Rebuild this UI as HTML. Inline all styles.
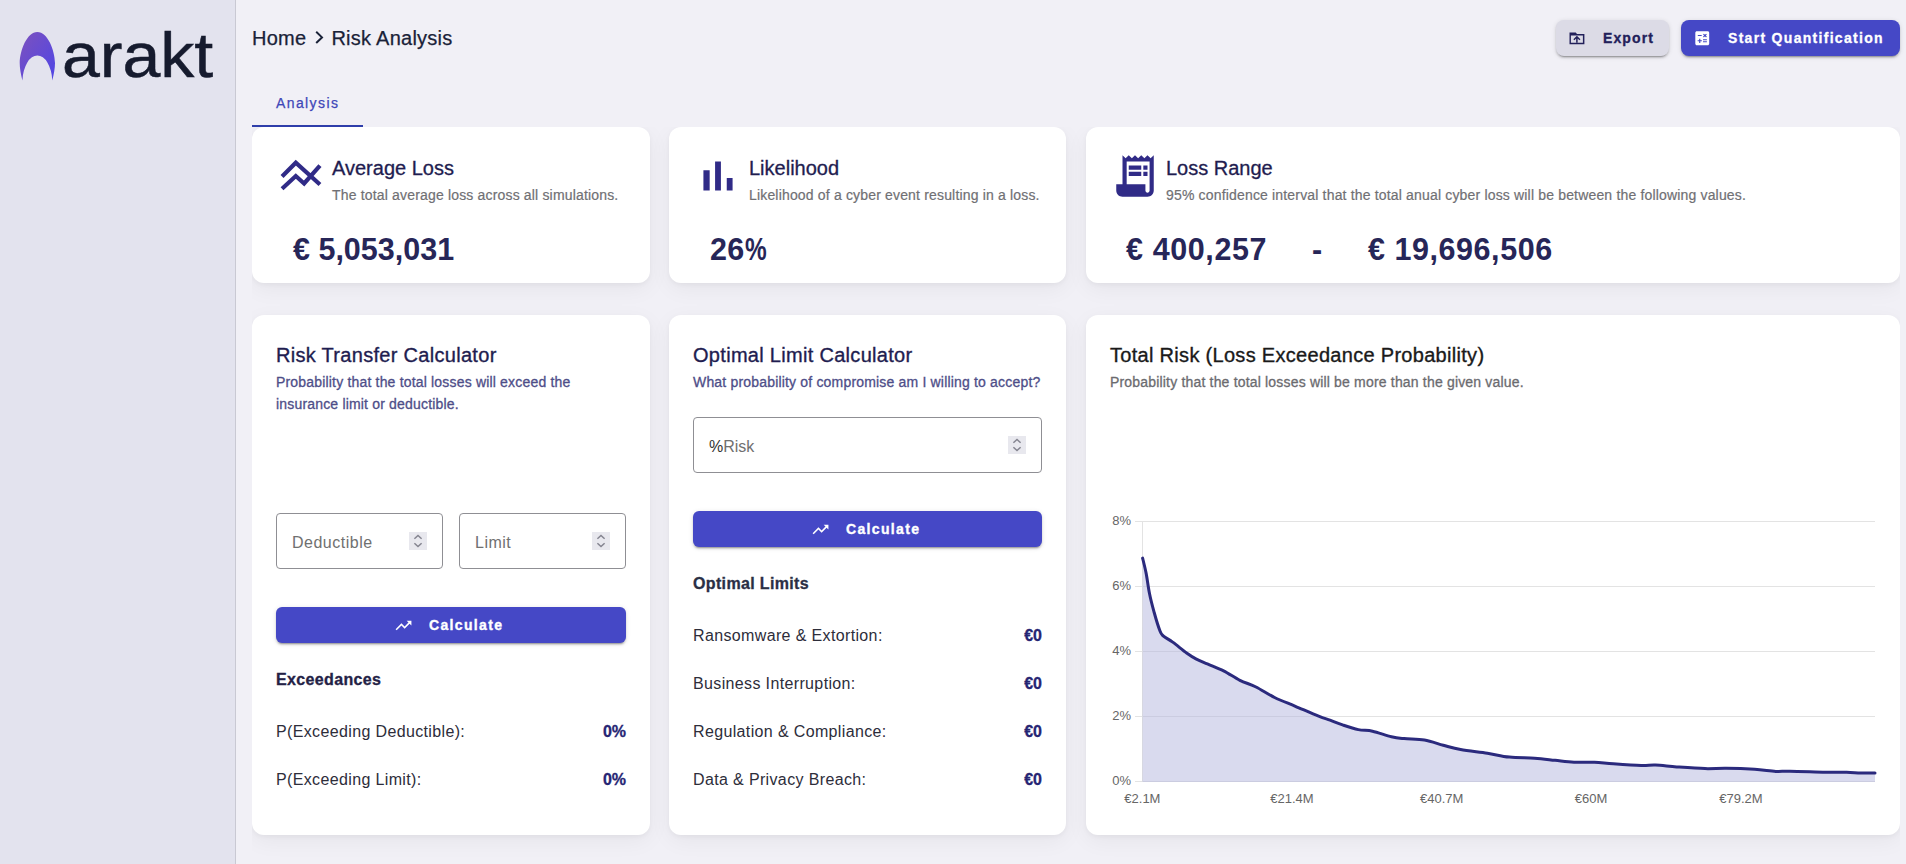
<!DOCTYPE html>
<html><head><meta charset="utf-8">
<style>
*{box-sizing:border-box;margin:0;padding:0}
html,body{width:1906px;height:864px;overflow:hidden}
body{font-family:"Liberation Sans",sans-serif;background:#f1f0f6;position:relative;color:#1f1d4f}
.abs{position:absolute}
#side{left:0;top:0;width:235px;height:864px;background:#e3e3ee;border-right:1px solid #c9c9d3;width:236px}
.logo-text{left:62px;top:14.5px;font-size:63px;color:#161b2e;letter-spacing:0px;line-height:80px;-webkit-text-stroke:0.5px #161b2e;transform-origin:0 0;transform:scaleX(1.08)}
.crumb{left:252px;top:26px;font-size:20px;color:#1a2238;line-height:24px;white-space:nowrap;letter-spacing:0.26px;-webkit-text-stroke:0.25px currentColor}
.btn{border-radius:8px;font-weight:bold;font-size:14px;-webkit-text-stroke:0.3px currentColor;letter-spacing:1.1px;line-height:36px;white-space:nowrap}
#export{left:1556px;top:20px;width:113px;height:36px;background:#dcdbe6;color:#22205a;box-shadow:0 3px 1px -2px rgba(0,0,0,.2),0 2px 2px 0 rgba(0,0,0,.14),0 1px 5px 0 rgba(0,0,0,.12)}
#startq{left:1681px;top:20px;width:219px;height:36px;background:#4548c6;color:#fff;letter-spacing:1.3px;box-shadow:0 3px 1px -2px rgba(0,0,0,.2),0 2px 2px 0 rgba(0,0,0,.14),0 1px 5px 0 rgba(0,0,0,.12)}
.tab{left:276px;top:95px;font-size:14px;color:#3f47b8;letter-spacing:1.4px;font-weight:normal;-webkit-text-stroke:0.25px currentColor}
.tabline{left:252px;top:125px;width:111px;height:2px;background:#2f3eaa}
.card{background:#fff;border-radius:12px;box-shadow:0 2px 5px rgba(0,0,0,.04),0 6px 22px rgba(0,0,0,.05)}
.ctitle{font-size:20px;line-height:24px;color:#1f1d50;white-space:nowrap;-webkit-text-stroke:0.3px currentColor}
.cdesc{font-size:14px;line-height:18px;color:#707074;white-space:nowrap;letter-spacing:0.17px;-webkit-text-stroke:0.2px currentColor}
.cval{font-size:30.5px;font-weight:bold;color:#272658;white-space:nowrap;line-height:36px}
.h2{font-size:20px;line-height:24px;color:#1f1d50;white-space:nowrap;letter-spacing:0.3px;-webkit-text-stroke:0.35px currentColor}
.sub{font-size:14px;line-height:22px;color:#4e4e88;letter-spacing:0.18px;-webkit-text-stroke:0.3px currentColor}
.input{border:1px solid #8f8f94;border-radius:4px;background:#fff}
.ph{font-size:16px;color:#707070;line-height:20px;white-space:nowrap;letter-spacing:0.5px;margin-top:1px}
.spin{width:18px;height:18px;background:#e8e8ee}
.calc{-webkit-text-stroke:0.35px #fff;background:#4548c6;border-radius:6px;box-shadow:0 3px 1px -2px rgba(0,0,0,.2),0 2px 2px 0 rgba(0,0,0,.14),0 1px 5px 0 rgba(0,0,0,.12);color:#fff;font-weight:bold;font-size:14px;letter-spacing:1.35px;line-height:36px;white-space:nowrap}
.sect{-webkit-text-stroke:0.3px currentColor;font-size:16px;font-weight:bold;color:#232145;line-height:20px;white-space:nowrap;letter-spacing:0.35px}
.row{font-size:16px;color:#2d2d3a;line-height:20px;white-space:nowrap;letter-spacing:0.36px}
.rval{-webkit-text-stroke:0.3px currentColor;font-size:16px;font-weight:bold;color:#262573;line-height:20px;white-space:nowrap;text-align:right}
.ax{font-size:13px;color:#666;line-height:14px;white-space:nowrap}
</style></head>
<body>

<div id="side" class="abs"></div>
<!-- logo -->
<svg class="abs" style="left:0;top:0" width="80" height="100" viewBox="0 0 80 100">
<defs><linearGradient id="lg" x1="0" y1="0" x2="1" y2="1"><stop offset="0" stop-color="#7d52bd"/><stop offset="1" stop-color="#4f45e6"/></linearGradient></defs>
<path d="M22.4 80.4 C20.8 74 19.7 68 19.7 62.9 C20 50 27 32 37.35 32 C47.7 32 54.7 50 55 62.9 C55 68 53.9 74 52.3 80.4 A15 27.1 0 0 0 22.4 80.4 Z" fill="url(#lg)"/>
</svg>
<div class="abs logo-text">arakt</div>
<!-- breadcrumb -->
<div class="abs crumb">Home<svg style="display:inline-block;vertical-align:-2px;margin:0 7px 0 8px" width="10" height="18" viewBox="0 0 10 18"><path d="M2.2 2.8 L8 8.4 L2.2 14" fill="none" stroke="#1a2238" stroke-width="2"/></svg>Risk Analysis</div>
<!-- buttons -->
<div id="export" class="abs btn">
 <svg class="abs" style="left:13px;top:11.5px" width="17" height="14" viewBox="0 0 17 14"><path fill-rule="evenodd" d="M0.5 0.6 H6.7 L8 1.9 H15.4 V12.3 H0.5 Z M1.9 3.5 V10.7 H13.9 V3.5 Z" fill="#22205a"/><path d="M4.9 7.7 L7.9 4.7 L10.9 7.7 M7.9 5.2 V10.7" fill="none" stroke="#22205a" stroke-width="1.5"/></svg>
 <span class="abs" style="left:47px;top:0">Export</span>
</div>
<div id="startq" class="abs btn">
 <svg class="abs" style="left:12px;top:9px" width="18.5" height="18.5" viewBox="0 0 24 24"><path d="M19 3H5c-1.1 0-2 .9-2 2v14c0 1.1.9 2 2 2h14c1.1 0 2-.9 2-2V5c0-1.1-.9-2-2-2zm-5.970 4.06L14.09 6l1.41 1.41L16.91 6l1.06 1.06-1.41 1.41 1.41 1.41-1.06 1.06-1.41-1.4-1.41 1.41-1.06-1.060 1.41-1.41-1.41-1.42zm-6.78.66h5v1.5h-5v-1.5zM11.5 16h-2v2H8v-2H6v-1.5h2v-2h1.5v2h2V16zm6.5 1.25h-5v-1.5h5v1.5zm0-2.5h-5v-1.5h5v1.5z" fill="#fff"/></svg>
 <span class="abs" style="left:47px;top:0">Start Quantification</span>
</div>
<!-- tab -->
<div class="abs tab">Analysis</div>
<div class="abs tabline"></div>

<!-- cards -->
<div class="abs" style="left:252px;top:127px;width:1648px;height:737px;overflow:hidden"><div class="abs" style="left:-252px;top:-127px;width:1906px;height:864px">
<div class="abs card" style="left:252px;top:127px;width:398px;height:156px"></div>
<div class="abs card" style="left:669px;top:127px;width:397px;height:156px"></div>
<div class="abs card" style="left:1086px;top:127px;width:814px;height:156px"></div>
<div class="abs card" style="left:252px;top:315px;width:398px;height:520px"></div>
<div class="abs card" style="left:669px;top:315px;width:397px;height:520px"></div>
<div class="abs card" style="left:1086px;top:315px;width:814px;height:520px"></div>
</div></div>

<svg class="abs" style="left:276px;top:151px" width="50" height="50" viewBox="0 0 24 24"><path d="M2.9 12.2 L9.5 5.6 L21.1 16.1 M21.1 7.0 L13.5 15.6 L9.5 12.0 L2.9 18.1" fill="none" stroke="#302b87" stroke-width="2" stroke-linejoin="miter"/></svg>
<div class="abs ctitle" style="left:332px;top:156px">Average Loss</div>
<div class="abs cdesc" style="left:332px;top:186px">The total average loss across all simulations.</div>
<div class="abs cval" style="left:293px;top:231px">€ 5,053,031</div>

<svg class="abs" style="left:693px;top:151px" width="50" height="50" viewBox="0 0 24 24"><path d="M5 9.2h3V19H5zM10.6 5h2.8v14h-2.8zm5.6 8H19v6h-2.8z" fill="#302b87"/></svg>
<div class="abs ctitle" style="left:749px;top:156px">Likelihood</div>
<div class="abs cdesc" style="left:749px;top:186px">Likelihood of a cyber event resulting in a loss.</div>
<div class="abs cval" style="left:710px;top:231px;letter-spacing:0.3px">26<span style="display:inline-block;transform:scaleX(.8);transform-origin:0 50%">%</span></div>

<svg class="abs" style="left:1110px;top:151px" width="50" height="50" viewBox="0 0 24 24"><path d="M19.5 3.5 18 2l-1.5 1.5L15 2l-1.5 1.5L12 2l-1.5 1.5L9 2 7.5 3.5 6 2v14H3v3c0 1.66 1.34 3 3 3h12c1.66 0 3-1.34 3-3V2l-1.5 1.5zM19 19c0 .55-.45 1-1 1s-1-.45-1-1v-3H8V5h11v14z" fill="#302b87"/><path d="M9 7h6v2H9zm7 0h2v2h-2zm-7 3h6v2H9zm7 0h2v2h-2z" fill="#302b87"/></svg>
<div class="abs ctitle" style="left:1166px;top:156px">Loss Range</div>
<div class="abs cdesc" style="left:1166px;top:186px">95% confidence interval that the total anual cyber loss will be between the following values.</div>
<div class="abs cval" style="left:1126px;top:231px;letter-spacing:0.6px">€ 400,257</div>
<div class="abs cval" style="left:1312px;top:231px">-</div>
<div class="abs cval" style="left:1368px;top:231px;letter-spacing:0.55px">€ 19,696,506</div>

<!-- row 2 cards -->

<!-- Risk transfer -->
<div class="abs h2" style="left:276px;top:343px">Risk Transfer Calculator</div>
<div class="abs sub" style="left:276px;top:371px;width:350px">Probability that the total losses will exceed the insurance limit or deductible.</div>
<div class="abs input" style="left:276px;top:513px;width:167px;height:56px"></div>
<div class="abs ph" style="left:292px;top:532px">Deductible</div>
<div class="abs spin" style="left:409px;top:532px"><svg class="abs" style="left:0;top:0" width="18" height="18" viewBox="0 0 18 18"><path d="M5.4 6.8 L9 3.5 L12.6 6.8 M5.4 11.2 L9 14.5 L12.6 11.2" fill="none" stroke="#858590" stroke-width="1.5"/></svg></div>
<div class="abs input" style="left:459px;top:513px;width:167px;height:56px"></div>
<div class="abs ph" style="left:475px;top:532px">Limit</div>
<div class="abs spin" style="left:592px;top:532px"><svg class="abs" style="left:0;top:0" width="18" height="18" viewBox="0 0 18 18"><path d="M5.4 6.8 L9 3.5 L12.6 6.8 M5.4 11.2 L9 14.5 L12.6 11.2" fill="none" stroke="#858590" stroke-width="1.5"/></svg></div>
<div class="abs calc" style="left:276px;top:607px;width:350px;height:36px"><svg class="abs" style="left:117.8px;top:8.5px" width="19" height="19" viewBox="0 0 24 24"><path d="M16 6l2.29 2.29-4.88 4.88-4-4L2 16.59 3.41 18l6-6 4 4 6.3-6.29L22 12V6z" fill="#fff"/></svg><span class="abs" style="left:153px;top:0">Calculate</span></div>
<div class="abs sect" style="left:276px;top:670px">Exceedances</div>
<div class="abs row" style="left:276px;top:722px">P(Exceeding Deductible):</div>
<div class="abs rval" style="left:526px;top:722px;width:100px">0%</div>
<div class="abs row" style="left:276px;top:770px">P(Exceeding Limit):</div>
<div class="abs rval" style="left:526px;top:770px;width:100px">0%</div>

<!-- Optimal limit -->
<div class="abs h2" style="left:693px;top:343px">Optimal Limit Calculator</div>
<div class="abs sub" style="left:693px;top:371px;width:360px;white-space:nowrap">What probability of compromise am I willing to accept?</div>
<div class="abs input" style="left:693px;top:417px;width:349px;height:56px"></div>
<div class="abs ph" style="left:709px;top:436px;letter-spacing:0"><span style="color:#333">%</span>Risk</div>
<div class="abs spin" style="left:1008px;top:436px"><svg class="abs" style="left:0;top:0" width="18" height="18" viewBox="0 0 18 18"><path d="M5.4 6.8 L9 3.5 L12.6 6.8 M5.4 11.2 L9 14.5 L12.6 11.2" fill="none" stroke="#858590" stroke-width="1.5"/></svg></div>
<div class="abs calc" style="left:693px;top:511px;width:349px;height:36px"><svg class="abs" style="left:117.8px;top:8.5px" width="19" height="19" viewBox="0 0 24 24"><path d="M16 6l2.29 2.29-4.88 4.88-4-4L2 16.59 3.41 18l6-6 4 4 6.3-6.29L22 12V6z" fill="#fff"/></svg><span class="abs" style="left:153px;top:0">Calculate</span></div>
<div class="abs sect" style="left:693px;top:574px;color:#2a2f45">Optimal Limits</div>
<div class="abs row" style="left:693px;top:626px">Ransomware &amp; Extortion:</div>
<div class="abs rval" style="left:942px;top:626px;width:100px">€0</div>
<div class="abs row" style="left:693px;top:674px">Business Interruption:</div>
<div class="abs rval" style="left:942px;top:674px;width:100px">€0</div>
<div class="abs row" style="left:693px;top:722px">Regulation &amp; Compliance:</div>
<div class="abs rval" style="left:942px;top:722px;width:100px">€0</div>
<div class="abs row" style="left:693px;top:770px">Data &amp; Privacy Breach:</div>
<div class="abs rval" style="left:942px;top:770px;width:100px">€0</div>

<!-- Chart card -->
<div class="abs h2" style="left:1110px;top:343px;color:#1a1a1a">Total Risk (Loss Exceedance Probability)</div>
<div class="abs sub" style="left:1110px;top:371px;color:#6b6b6f;white-space:nowrap">Probability that the total losses will be more than the given value.</div>
<!--<!--CHART--><svg class="abs" style="left:1086px;top:315px" width="814" height="520" viewBox="0 0 814 520">
<line x1="49" y1="206.5" x2="789" y2="206.5" stroke="#e3e3e3" stroke-width="1"/><line x1="49" y1="271.5" x2="789" y2="271.5" stroke="#e3e3e3" stroke-width="1"/><line x1="49" y1="336.5" x2="789" y2="336.5" stroke="#e3e3e3" stroke-width="1"/><line x1="49" y1="401.5" x2="789" y2="401.5" stroke="#e3e3e3" stroke-width="1"/><line x1="49" y1="466.5" x2="789" y2="466.5" stroke="#e3e3e3" stroke-width="1"/>
<line x1="56.5" y1="206" x2="56.5" y2="466" stroke="#e3e3e3" stroke-width="1"/>
<path d="M56.6 243.1 C57.2 245.6 58.9 252.1 60.1 258.1 C61.3 264.1 62.2 272.4 63.6 279.0 C64.9 285.6 66.5 291.3 68.2 297.5 C69.9 303.7 72.5 312.1 74.0 316.0 C75.5 319.9 75.4 319.2 77.5 321.1 C79.6 323.0 82.9 324.3 86.7 327.1 C90.6 329.9 96.7 335.2 100.6 338.0 C104.5 340.8 106.4 342.0 109.9 343.8 C113.4 345.6 116.8 346.9 121.4 348.9 C126.0 350.9 132.2 353.1 137.6 355.8 C143.0 358.5 148.5 362.6 153.9 365.3 C159.3 368.0 164.2 369.1 170.0 372.0 C175.8 374.9 182.0 379.3 188.6 382.5 C195.2 385.7 202.1 388.2 209.4 391.3 C216.7 394.4 226.8 398.9 232.6 401.2 C238.4 403.5 240.0 403.7 244.0 405.1 C248.0 406.6 251.9 408.3 256.6 409.9 C261.3 411.5 267.3 413.6 272.3 414.6 C277.3 415.7 281.0 415.0 286.5 416.2 C292.0 417.4 300.2 420.5 305.4 421.7 C310.7 422.9 312.5 423.0 318.0 423.6 C323.5 424.2 331.9 424.0 338.4 425.1 C345.0 426.2 351.3 428.7 357.3 430.3 C363.3 431.9 367.2 433.3 374.6 434.6 C381.9 435.9 393.3 437.0 401.4 438.2 C409.5 439.5 415.5 441.3 423.4 442.1 C431.3 442.9 441.0 442.7 448.6 443.2 C456.2 443.7 462.5 444.6 469.1 445.3 C475.7 446.0 481.4 446.9 488.0 447.2 C494.6 447.5 501.9 447.0 508.4 447.2 C515.0 447.5 519.5 448.2 527.3 448.7 C535.1 449.3 548.2 450.3 555.2 450.5 C562.2 450.7 563.5 449.9 569.4 450.1 C575.3 450.3 582.4 451.3 590.7 451.9 C599.0 452.5 610.8 453.4 619.0 453.6 C627.2 453.8 631.9 453.2 640.2 453.3 C648.5 453.4 660.3 453.8 668.6 454.3 C676.9 454.8 683.9 456.1 689.8 456.4 C695.7 456.7 695.7 456.1 704.0 456.2 C712.3 456.3 730.0 457.0 739.4 457.2 C748.9 457.4 754.8 457.1 760.7 457.2 C766.6 457.3 770.1 457.9 774.8 458.0 C779.5 458.1 786.6 457.9 789.0 457.9 L789.0 467.0 L56.5 467.0 Z" fill="rgb(179,181,221)" fill-opacity="0.5"/>
<path d="M56.6 243.1 C57.2 245.6 58.9 252.1 60.1 258.1 C61.3 264.1 62.2 272.4 63.6 279.0 C64.9 285.6 66.5 291.3 68.2 297.5 C69.9 303.7 72.5 312.1 74.0 316.0 C75.5 319.9 75.4 319.2 77.5 321.1 C79.6 323.0 82.9 324.3 86.7 327.1 C90.6 329.9 96.7 335.2 100.6 338.0 C104.5 340.8 106.4 342.0 109.9 343.8 C113.4 345.6 116.8 346.9 121.4 348.9 C126.0 350.9 132.2 353.1 137.6 355.8 C143.0 358.5 148.5 362.6 153.9 365.3 C159.3 368.0 164.2 369.1 170.0 372.0 C175.8 374.9 182.0 379.3 188.6 382.5 C195.2 385.7 202.1 388.2 209.4 391.3 C216.7 394.4 226.8 398.9 232.6 401.2 C238.4 403.5 240.0 403.7 244.0 405.1 C248.0 406.6 251.9 408.3 256.6 409.9 C261.3 411.5 267.3 413.6 272.3 414.6 C277.3 415.7 281.0 415.0 286.5 416.2 C292.0 417.4 300.2 420.5 305.4 421.7 C310.7 422.9 312.5 423.0 318.0 423.6 C323.5 424.2 331.9 424.0 338.4 425.1 C345.0 426.2 351.3 428.7 357.3 430.3 C363.3 431.9 367.2 433.3 374.6 434.6 C381.9 435.9 393.3 437.0 401.4 438.2 C409.5 439.5 415.5 441.3 423.4 442.1 C431.3 442.9 441.0 442.7 448.6 443.2 C456.2 443.7 462.5 444.6 469.1 445.3 C475.7 446.0 481.4 446.9 488.0 447.2 C494.6 447.5 501.9 447.0 508.4 447.2 C515.0 447.5 519.5 448.2 527.3 448.7 C535.1 449.3 548.2 450.3 555.2 450.5 C562.2 450.7 563.5 449.9 569.4 450.1 C575.3 450.3 582.4 451.3 590.7 451.9 C599.0 452.5 610.8 453.4 619.0 453.6 C627.2 453.8 631.9 453.2 640.2 453.3 C648.5 453.4 660.3 453.8 668.6 454.3 C676.9 454.8 683.9 456.1 689.8 456.4 C695.7 456.7 695.7 456.1 704.0 456.2 C712.3 456.3 730.0 457.0 739.4 457.2 C748.9 457.4 754.8 457.1 760.7 457.2 C766.6 457.3 770.1 457.9 774.8 458.0 C779.5 458.1 786.6 457.9 789.0 457.9" fill="none" stroke="#2b2a7d" stroke-width="3" stroke-linejoin="round" stroke-linecap="round"/>
</svg>
<div class="abs ax" style="left:1071px;width:60px;text-align:right;top:513.9px">8%</div>
<div class="abs ax" style="left:1071px;width:60px;text-align:right;top:578.8px">6%</div>
<div class="abs ax" style="left:1071px;width:60px;text-align:right;top:643.8px">4%</div>
<div class="abs ax" style="left:1071px;width:60px;text-align:right;top:708.8px">2%</div>
<div class="abs ax" style="left:1071px;width:60px;text-align:right;top:773.8px">0%</div>
<div class="abs ax" style="left:1092.4px;width:100px;text-align:center;top:792px">€2.1M</div>
<div class="abs ax" style="left:1242.0px;width:100px;text-align:center;top:792px">€21.4M</div>
<div class="abs ax" style="left:1391.7px;width:100px;text-align:center;top:792px">€40.7M</div>
<div class="abs ax" style="left:1541.0px;width:100px;text-align:center;top:792px">€60M</div>
<div class="abs ax" style="left:1691.0px;width:100px;text-align:center;top:792px">€79.2M</div>
<!--/CHART-->-->

</body></html>
